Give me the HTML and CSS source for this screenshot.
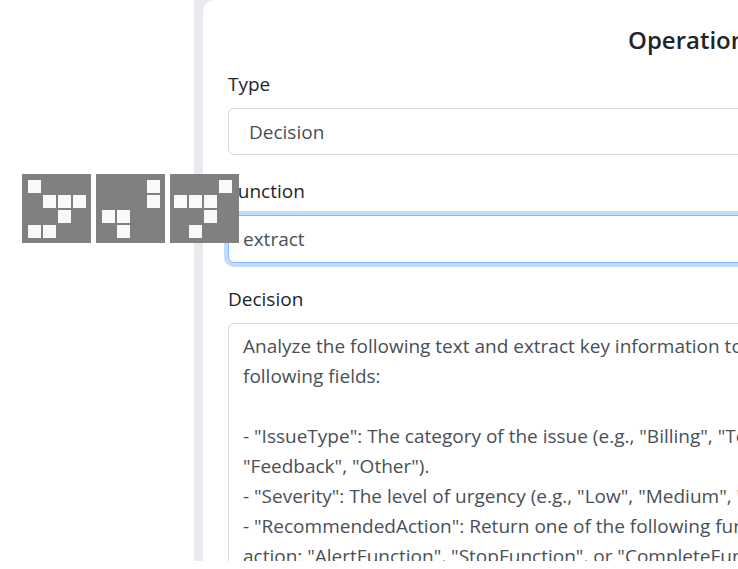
FILE: index.html
```html
<!DOCTYPE html>
<html lang="en">
<head>
<meta charset="UTF-8">
<meta name="viewport" content="width=device-width, initial-scale=1.0">
<title>Operation</title>
<link rel="stylesheet" href="styles.css">
</head>
<body>
<div class="page">
    <div class="side"></div>
    <div class="panel">
        <div class="card">
            <h2 class="card-title">Operation</h2>
            <form class="op-form">
                <div class="field">
                    <label for="op-type">Type</label>
                    <select id="op-type" class="control">
                        <option>Decision</option>
                        <option>Action</option>
                    </select>
                </div>
                <div class="field">
                    <label for="op-function">Function</label>
                    <input type="text" id="op-function" class="control focused" value="extract">
                </div>
                <div class="field">
                    <label for="op-decision">Decision</label>
                    <textarea id="op-decision" class="control prompt" wrap="off" rows="9">Analyze the following text and extract key information to populate the
following fields:

- "IssueType": The category of the issue (e.g., "Billing", "Technical", "Account",
"Feedback", "Other").
- "Severity": The level of urgency (e.g., "Low", "Medium", "High", "Critical").
- "RecommendedAction": Return one of the following function names as the recommended
action: "AlertFunction", "StopFunction", or "CompleteFunction".</textarea>
                </div>
            </form>
        </div>
    </div>
</div>

<!-- verification tiles -->
<div class="tiles">
    <div class="tile">
        <span class="on"></span><span></span><span></span><span></span>
        <span></span><span class="on"></span><span class="on"></span><span class="on"></span>
        <span></span><span></span><span class="on"></span><span></span>
        <span class="on"></span><span class="on"></span><span></span><span></span>
    </div>
    <div class="tile">
        <span></span><span></span><span></span><span class="on"></span>
        <span></span><span></span><span></span><span class="on"></span>
        <span class="on"></span><span class="on"></span><span></span><span></span>
        <span></span><span class="on"></span><span></span><span></span>
    </div>
    <div class="tile tile-shift">
        <span></span><span></span><span></span><span class="on"></span>
        <span class="on"></span><span class="on"></span><span class="on"></span><span></span>
        <span></span><span></span><span class="on"></span><span></span>
        <span></span><span class="on"></span><span></span><span></span>
    </div>
</div>
</body>
</html>
```

FILE: styles.css
```css
body {
    font-family: "Open Sans", "Noto Sans", sans-serif;
    background-color: #fff;
    color: #212529;
    margin: 0;
    padding: 0;
}

.page {
    display: flex;
    height: 561px;
    overflow: hidden;
}

.side {
    width: 194px;
    flex-shrink: 0;
}

.panel {
    flex: 1;
    padding-left: 9px;
    background: linear-gradient(to right, #e8eaee, #f0f1f4);
    overflow: hidden;
}

.card {
    width: 1000px;
    background-color: #fff;
    border-radius: 12px 0 0 0;
    padding: 25px 0 0 25px;
    height: 100%;
}

.card-title {
    margin: 0 0 14px;
    font-size: 24px;
    font-weight: 600;
    line-height: 30px;
    text-align: center;
    padding-right: 82px;
    color: #212529;
}

.op-form {
    display: flex;
    flex-direction: column;
    gap: 21px;
}

.field {
    display: flex;
    flex-direction: column;
}

label {
    font-size: 19px;
    line-height: 30px;
    margin-bottom: 9px;
    color: #212529;
}

.control {
    width: 900px;
    box-sizing: border-box;
    font-family: inherit;
    font-size: 19px;
    line-height: 30px;
    color: #495057;
    background-color: #fff;
    border: 1px solid #d3d7dd;
    border-radius: 6px;
    padding: 7px 14px;
    margin: 0;
    outline: none;
}

select.control {
    appearance: none;
    -webkit-appearance: none;
    height: 47px;
    padding-left: 20px;
}

.control.focused {
    border-color: #86b7fe;
    box-shadow: 0 0 0 4px rgba(13, 110, 253, 0.25);
    height: 48px;
}

.prompt {
    resize: none;
    overflow: hidden;
    white-space: pre;
    padding-top: 7px;
    height: 300px;
}

.tiles {
    position: absolute;
    left: 22px;
    top: 174px;
    display: flex;
    gap: 5px;
}

.tile {
    width: 69px;
    height: 69px;
    box-sizing: border-box;
    padding: 6px 0 0 6px;
    background-color: #808080;
    display: grid;
    grid-template-columns: repeat(4, 13px);
    grid-template-rows: repeat(4, 13px);
    gap: 2px;
    align-content: start;
}

.tile-shift {
    padding-left: 4px;
}

.tile .on {
    background-color: rgba(255, 255, 255, 0.95);
}
```
